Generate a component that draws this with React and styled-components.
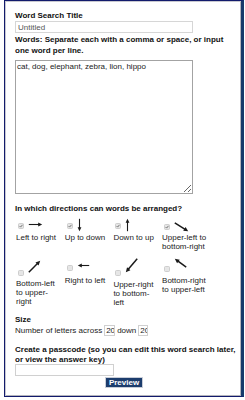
import styled, { createGlobalStyle } from "styled-components";

const GlobalStyle = createGlobalStyle`
  html, body {
    margin: 0;
    padding: 0;
    background: #fff;
  }
  body {
    font-family: "Liberation Sans", Arial, sans-serif;
    color: #222;
  }
`;

const DIRECTIONS = [
  { label: "Left to right", dir: "right", checked: true, w: 15, h: 5, boxTop: 6, arrowTop: 5, icon: 15.5 },
  { label: "Up to down", dir: "down", checked: true, w: 5, h: 14, boxTop: 6, arrowTop: 1, icon: 15.5 },
  { label: "Down to up", dir: "up", checked: true, w: 5, h: 14, boxTop: 6, arrowTop: 1, icon: 15.5 },
  { label: "Upper-left to bottom-right", dir: "downRight", checked: true, w: 15, h: 10, boxTop: 7, arrowTop: 5, icon: 15.5, bold: true },
  { label: "Bottom-left to upper-right", dir: "upRight", checked: false, w: 13, h: 13, boxTop: 14, arrowTop: 4, icon: 22.5, bold: true },
  { label: "Right to left", dir: "left", checked: false, w: 13, h: 5, boxTop: 9, arrowTop: 7, icon: 19.5 },
  { label: "Upper-right to bottom-left", dir: "downLeft", checked: false, w: 13, h: 15, boxTop: 14, arrowTop: 2, icon: 23.5, bold: true },
  { label: "Bottom-right to upper-left", dir: "upLeft", checked: false, w: 13, h: 10, boxTop: 10, arrowTop: 2, icon: 19.5, bold: true },
];

const ENDS = {
  right: [[0, 0.5], [1, 0.5]],
  left: [[1, 0.5], [0, 0.5]],
  down: [[0.5, 0], [0.5, 1]],
  up: [[0.5, 1], [0.5, 0]],
  downRight: [[0, 0], [1, 1]],
  upRight: [[0, 1], [1, 0]],
  downLeft: [[1, 0], [0, 1]],
  upLeft: [[1, 1], [0, 0]],
};

function Arrow({ dir, w, h, bold }) {
  const [[sx, sy], [ex, ey]] = ENDS[dir];
  const pad = 0.8;
  const x1 = pad + sx * (w - 2 * pad);
  const y1 = pad + sy * (h - 2 * pad);
  const x2 = pad + ex * (w - 2 * pad);
  const y2 = pad + ey * (h - 2 * pad);
  const len = Math.hypot(x2 - x1, y2 - y1);
  const ux = (x2 - x1) / len;
  const uy = (y2 - y1) / len;
  const hl = bold ? 4.5 : 4;
  const hw = bold ? 2.2 : 1.9;
  const bx = x2 - ux * hl;
  const by = y2 - uy * hl;
  const head = `${x2},${y2} ${bx - uy * hw},${by + ux * hw} ${bx + uy * hw},${by - ux * hw}`;
  return (
    <svg width={w} height={h} viewBox={`0 0 ${w} ${h}`}>
      <line
        x1={x1}
        y1={y1}
        x2={x2 - ux * hl * 0.7}
        y2={y2 - uy * hl * 0.7}
        stroke="#1a1a1a"
        strokeWidth={bold ? 1.5 : 1.1}
      />
      <polygon points={head} fill="#1a1a1a" />
    </svg>
  );
}

function TinyCheck({ checked }) {
  return (
    <svg width="6" height="6" viewBox="0 0 6 6">
      <rect x="0.5" y="0.5" width="5" height="5" rx="1" fill="#e6e6e6" stroke="#c4c4c4" strokeWidth="0.8" />
      {checked && (
        <path d="M1.6 3.1 L2.6 4.1 L4.5 1.8" fill="none" stroke="#6a6a6a" strokeWidth="0.9" />
      )}
    </svg>
  );
}

function App() {
  return (
    <>
      <GlobalStyle />
      <Frame>
        <Heading>Word Search Title</Heading>
        <TitleInput defaultValue="Untitled" />

        <WordsHeading>
          Words: Separate each with a comma or space, or input one word per line.
        </WordsHeading>
        <WordsArea defaultValue="cat, dog, elephant, zebra, lion, hippo" />

        <DirHeading>In which directions can words be arranged?</DirHeading>
        <DirGrid>
          {DIRECTIONS.map((d) => (
            <DirCell key={d.label}>
              <IconRow $height={d.icon}>
                <BoxSlot $top={d.boxTop}>
                  <TinyCheck checked={d.checked} />
                </BoxSlot>
                <ArrowSlot $top={d.arrowTop}>
                  <Arrow dir={d.dir} w={d.w} h={d.h} bold={d.bold} />
                </ArrowSlot>
              </IconRow>
              <DirLabel>{d.label}</DirLabel>
            </DirCell>
          ))}
        </DirGrid>

        <SizeHeading>Size</SizeHeading>
        <SizeRow>
          Number of letters across
          <SizeInput defaultValue="20" />
          down
          <SizeInput defaultValue="20" $narrow />
        </SizeRow>

        <PassHeading>
          Create a passcode (so you can edit this word search later, or view the answer key)
        </PassHeading>
        <PassInput />
        <ButtonRow>
          <PreviewButton>Preview</PreviewButton>
        </ButtonRow>
      </Frame>
    </>
  );
}

const Frame = styled.div`
  margin-left: 4px;
  width: 240px;
  height: 397px;
  box-sizing: border-box;
  border: 1px solid #121a6c;
  border-right: 3px solid #173a6c;
  box-shadow: inset 1px 1px 0 #c8c8d0, inset -1px -1px 0 #b4b4bc;
  padding: 10px 8px 0 10px;
`;

const Heading = styled.div`
  font-size: 8px;
  font-weight: bold;
  line-height: 10px;
  color: #111;
`;

const TitleInput = styled.input`
  display: block;
  box-sizing: border-box;
  width: 178px;
  height: 12px;
  margin: 0;
  padding: 0 2px;
  border: 1px solid #d6d6d6;
  font-family: "Liberation Sans", Arial, sans-serif;
  font-size: 8px;
  color: #555;
  outline: none;
`;

const WordsHeading = styled(Heading)`
  margin-top: 1px;
  line-height: 11px;
`;

const WordsArea = styled.textarea`
  display: block;
  box-sizing: border-box;
  width: 178px;
  height: 134px;
  margin: 4px 0 0;
  padding: 1px 1px;
  border: 1px solid #a3a3a3;
  font-family: "Liberation Sans", Arial, sans-serif;
  font-size: 8px;
  line-height: 9px;
  color: #222;
  outline: none;
`;

const DirHeading = styled(Heading)`
  margin-top: 8.5px;
  line-height: 11px;
`;

const DirGrid = styled.div`
  display: grid;
  grid-template-columns: repeat(4, 48.7px);
  row-gap: 5.5px;
  align-items: start;
  margin-top: 3.5px;
`;

const DirCell = styled.div`
  display: flex;
  flex-direction: column;
`;

const IconRow = styled.div`
  display: flex;
  align-items: flex-start;
  height: ${({ $height }) => $height}px;
  padding-left: 3px;
`;

const BoxSlot = styled.div`
  display: flex;
  margin-top: ${({ $top }) => $top}px;
  margin-right: 4px;
`;

const ArrowSlot = styled.div`
  display: flex;
  margin-top: ${({ $top }) => $top}px;
`;

const DirLabel = styled.div`
  width: 45.5px;
  padding-left: 1px;
  font-size: 8px;
  line-height: 9px;
  color: #222;
`;

const SizeHeading = styled(Heading)`
  margin-top: 8.5px;
`;

const SizeRow = styled.div`
  display: flex;
  align-items: center;
  height: 11px;
  font-size: 8px;
  color: #222;
  white-space: nowrap;
`;

const SizeInput = styled.input`
  box-sizing: border-box;
  width: ${({ $narrow }) => ($narrow ? 10 : 11)}px;
  height: 11px;
  margin: 0 2px;
  padding: 0 0 0 1px;
  border: 1px solid #d0d0d0;
  font-family: "Liberation Sans", Arial, sans-serif;
  font-size: 8px;
  color: #222;
  outline: none;
`;

const PassHeading = styled(Heading)`
  margin-top: 9px;
  margin-right: -7px;
`;

const PassInput = styled.input`
  display: block;
  box-sizing: border-box;
  width: 99px;
  height: 12px;
  margin: -1px 0 0;
  padding: 0 2px;
  border: 1px solid #d0d0d0;
  outline: none;
`;

const ButtonRow = styled.div`
  display: flex;
  justify-content: center;
  margin-top: 1px;
`;

const PreviewButton = styled.button`
  box-sizing: border-box;
  height: 11px;
  padding: 0 3px;
  border: 1px solid #c9ced8;
  background: #1c3d6d;
  color: #fff;
  font-family: "Liberation Sans", Arial, sans-serif;
  font-size: 8px;
  font-weight: bold;
  line-height: 9px;
  cursor: pointer;
`;

export default App;
